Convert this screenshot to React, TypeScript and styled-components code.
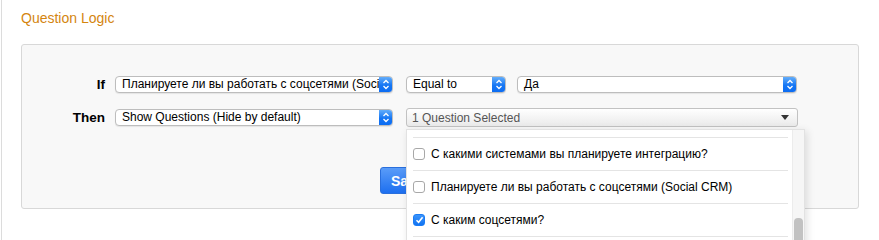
import React from "react"
import styled, { createGlobalStyle } from "styled-components"

const GlobalStyle = createGlobalStyle`
    html, body {
        margin: 0;
        padding: 0;
        background: #fff;
        font-family: "Liberation Sans", Arial, sans-serif;
        font-size: 12px;
        color: #000;
    }
`

const Page = styled.div`
    margin-left: 1px;
    border-left: 1px solid #dcdcdc;
    height: 240px;
    overflow: hidden;
    padding: 0 20px 0 19px;
    box-sizing: border-box;
`

const Title = styled.h3`
    margin: 0;
    padding-top: 10px;
    height: 44px;
    box-sizing: border-box;
    font-size: 14px;
    font-weight: normal;
    color: #d4850f;
`

const Panel = styled.div`
    position: relative;
    border: 1px solid #d8d8d8;
    border-radius: 3px;
    background: #f8f8f8;
    padding: 31px 0 14px 0;
    display: flex;
    flex-direction: column;
`

const Row = styled.div<{ $mt?: number }>`
    display: flex;
    align-items: center;
    margin-top: ${(p) => p.$mt || 0}px;
`

const Label = styled.label`
    width: 83px;
    margin-right: 10px;
    text-align: right;
    font-weight: bold;
    font-size: 13.5px;
`

const Select = styled.div<{ $w: number; $ml?: number }>`
    position: relative;
    width: ${(p) => p.$w}px;
    height: 17px;
    margin-left: ${(p) => p.$ml || 0}px;
    box-sizing: border-box;
    border: 1px solid #bdbdbd;
    border-radius: 4px;
    background: #fff;
    box-shadow: 0 1px 1px rgba(0, 0, 0, 0.08);
    display: flex;
    align-items: center;
    overflow: hidden;
`

const SelectText = styled.span`
    flex: 1;
    padding-left: 6px;
    white-space: nowrap;
    overflow: hidden;
    font-size: 12px;
    line-height: 15px;
`

const Stepper = styled.span`
    width: 14px;
    height: 17px;
    margin: -1px -1px -1px 0;
    flex: none;
    border-radius: 0 4px 4px 0;
    background: linear-gradient(#6db4fb, #1576f4 55%, #0b6bf2);
    display: flex;
    align-items: center;
    justify-content: center;
`

const MultiButton = styled.div`
    width: 392px;
    height: 19px;
    margin-left: 13px;
    box-sizing: border-box;
    border: 1px solid #c2c2c2;
    border-radius: 3px;
    background: linear-gradient(#ffffff, #eaeaea);
    display: flex;
    align-items: center;
    padding: 0 8px 0 5px;
    color: #555;
    font-size: 12px;
`

const MultiText = styled.span`
    flex: 1;
`

const Caret = styled.span`
    width: 0;
    height: 0;
    border-left: 4px solid transparent;
    border-right: 4px solid transparent;
    border-top: 5px solid #333;
`

const ButtonRow = styled.div`
    display: flex;
    margin-top: 40px;
    padding-left: 358px;
`

const SaveButton = styled.button`
    height: 27px;
    padding: 0 14px 0 10px;
    border: 1px solid #2a6fdc;
    border-radius: 3px;
    background: linear-gradient(#5a9cf8, #1d6ff0);
    color: #fff;
    font-family: "Liberation Sans", Arial, sans-serif;
    font-size: 14px;
    font-weight: bold;
`

const Dropdown = styled.div`
    position: absolute;
    left: 384px;
    top: 84px;
    width: 397px;
    height: 120px;
    background: #fff;
    border: 1px solid #e2e2e2;
    box-shadow: 2px 2px 8px rgba(0, 0, 0, 0.12);
    overflow: hidden;
    display: flex;
    z-index: 2;
`

const List = styled.ul`
    flex: 1;
    list-style: none;
    margin: -25px 0 0 0;
    padding: 0 4px 0 6px;
`

const Item = styled.li`
    height: 33px;
    box-sizing: border-box;
    border-bottom: 1px solid #e4e4e4;
    display: flex;
    align-items: center;
    gap: 6px;
    font-size: 12px;
`

const Check = styled.span<{ $on?: boolean }>`
    width: 12px;
    height: 12px;
    box-sizing: border-box;
    border-radius: 3px;
    border: 1px solid ${(p) => (p.$on ? "#1a7cf5" : "#a8a8a8")};
    background: ${(p) => (p.$on ? "linear-gradient(#3b94fb, #1274f2)" : "#fff")};
    display: flex;
    align-items: center;
    justify-content: center;
`

const Track = styled.div`
    width: 9px;
    flex: none;
    background: #f6f6f6;
    border-left: 1px solid #ececec;
    display: flex;
    flex-direction: column;
    padding: 88px 1px 0;
`

const Thumb = styled.div`
    height: 40px;
    border-radius: 4px;
    background: #c2c2c2;
`

const StepIcon = () => (
    <svg width="8" height="11" viewBox="0 0 8 11">
        <path d="M1.5 4 L4 1.5 L6.5 4 M1.5 7 L4 9.5 L6.5 7" fill="none" stroke="#fff" strokeWidth="1.3" />
    </svg>
)

const Tick = () => (
    <svg width="9" height="8" viewBox="0 0 9 8">
        <path d="M1.5 4.2 L3.6 6.3 L7.6 1.2" fill="none" stroke="#fff" strokeWidth="1.6" />
    </svg>
)

const options = [
    { text: "Какие модули вас интересуют?", on: false },
    { text: "С какими системами вы планируете интеграцию?", on: false },
    { text: "Планируете ли вы работать с соцсетями (Social CRM)", on: false },
    { text: "С каким соцсетями?", on: true },
]

const App = () => {
    return (
        <Page>
            <GlobalStyle />
            <Title>Question Logic</Title>
            <Panel>
                <Row>
                    <Label>If</Label>
                    <Select $w={278}>
                        <SelectText>Планируете ли вы работать с соцсетями (Social CRM)</SelectText>
                        <Stepper><StepIcon /></Stepper>
                    </Select>
                    <Select $w={100} $ml={13}>
                        <SelectText>Equal to</SelectText>
                        <Stepper><StepIcon /></Stepper>
                    </Select>
                    <Select $w={280} $ml={11}>
                        <SelectText>Да</SelectText>
                        <Stepper><StepIcon /></Stepper>
                    </Select>
                </Row>
                <Row $mt={15}>
                    <Label>Then</Label>
                    <Select $w={278}>
                        <SelectText>Show Questions (Hide by default)</SelectText>
                        <Stepper><StepIcon /></Stepper>
                    </Select>
                    <MultiButton>
                        <MultiText>1 Question Selected</MultiText>
                        <Caret />
                    </MultiButton>
                </Row>
                <ButtonRow>
                    <SaveButton>Save</SaveButton>
                </ButtonRow>
                <Dropdown>
                    <List>
                        {options.map((o) => (
                            <Item key={o.text}>
                                <Check $on={o.on}>{o.on && <Tick />}</Check>
                                {o.text}
                            </Item>
                        ))}
                    </List>
                    <Track>
                        <Thumb />
                    </Track>
                </Dropdown>
            </Panel>
        </Page>
    )
}

export default App
